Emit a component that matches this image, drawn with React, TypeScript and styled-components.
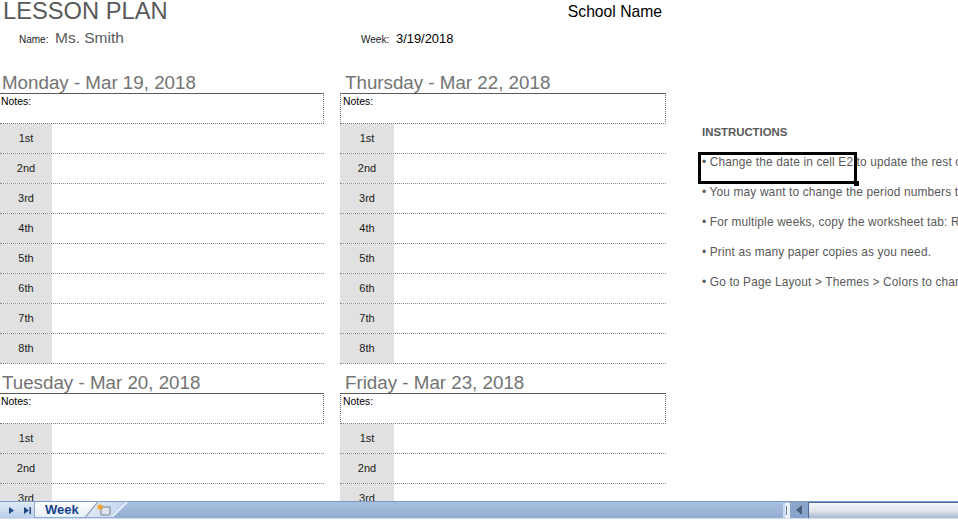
import React from 'react';
import styled, { createGlobalStyle } from 'styled-components';

const GlobalStyle = createGlobalStyle`
  html, body {
    margin: 0;
    padding: 0;
    background: #fff;
    font-family: "Liberation Sans", Arial, sans-serif;
  }
`;

const Page = styled.div`
  width: 958px;
  height: 520px;
  display: flex;
  flex-direction: column;
  overflow: hidden;
`;

const Sheet = styled.div`
  position: relative;
  height: 501px;
  flex: none;
  overflow: hidden;
`;

const Header = styled.header`
  width: 666px;
  height: 64px;
`;

const TitleRow = styled.div`
  display: flex;
  justify-content: space-between;
  align-items: flex-start;
  padding: 0 4px 0 3px;
`;

const Title = styled.h1`
  margin: 0;
  font-size: 23.7px;
  font-weight: 400;
  line-height: 23px;
  color: #595959;
`;

const SchoolName = styled.div`
  font-size: 15.7px;
  line-height: 24px;
  color: #000;
`;

const InfoRow = styled.div`
  display: flex;
  align-items: baseline;
  margin-top: 5px;
`;

const InfoField = styled.div<{ $width: number; $indent: number }>`
  width: ${(p) => p.$width}px;
  padding-left: ${(p) => p.$indent}px;
  display: flex;
  align-items: baseline;
  box-sizing: border-box;
`;

const InfoLabel = styled.span<{ $width: number }>`
  width: ${(p) => p.$width}px;
  font-size: 10px;
  color: #1a1a1a;
`;

const InfoValue = styled.span<{ $size: number; $color: string }>`
  font-size: ${(p) => p.$size}px;
  line-height: 18px;
  color: ${(p) => p.$color};
`;

const Body = styled.div`
  display: flex;
  align-items: flex-start;
`;

const DayColumn = styled.div<{ $width: number; $gap: number }>`
  width: ${(p) => p.$width}px;
  margin-right: ${(p) => p.$gap}px;
  flex: none;
`;

const DayTitle = styled.h2<{ $indent: number }>`
  margin: 0;
  height: 29px;
  box-sizing: border-box;
  padding: 8px 0 0 ${(p) => p.$indent}px;
  font-size: 18.75px;
  font-weight: 400;
  line-height: 21px;
  color: #737373;
  white-space: nowrap;
`;

const Notes = styled.div<{ $boxed: boolean }>`
  height: 31px;
  box-sizing: border-box;
  border-top: 1px solid #595959;
  border-right: 1px dotted #737373;
  border-bottom: 1px dotted #737373;
  border-left: ${(p) => (p.$boxed ? '1px dotted #737373' : 'none')};
  padding: 1px 0 0 ${(p) => (p.$boxed ? 2 : 1)}px;
  font-size: 10.4px;
  line-height: 14px;
  color: #000;
`;

const Period = styled.div<{ $cell: number }>`
  height: 30px;
  box-sizing: border-box;
  border-bottom: 1px dotted #888;
  display: grid;
  grid-template-columns: ${(p) => p.$cell}px 1fr;
`;

const PeriodLabel = styled.div`
  background: #e1e1e1;
  display: flex;
  align-items: center;
  justify-content: center;
  padding-bottom: 2px;
  font-size: 11px;
  color: #1a1a1a;
`;

const Instructions = styled.aside`
  flex: none;
  width: 256px;
  margin-left: 20px;
  padding-top: 60px;
  white-space: nowrap;
  overflow: hidden;
`;

const InstructionsTitle = styled.div`
  height: 30px;
  font-size: 11.4px;
  font-weight: 700;
  line-height: 16px;
  color: #595959;
`;

const InstructionLine = styled.div`
  height: 30px;
  font-size: 11.9px;
  letter-spacing: 0.15px;
  line-height: 16px;
  color: #595959;
`;

const SelectedCell = styled.div`
  position: absolute;
  left: 698px;
  top: 152px;
  width: 159px;
  height: 32px;
  box-sizing: border-box;
  border: 3px solid #000;

  &::after {
    content: '';
    position: absolute;
    right: -5px;
    bottom: -5px;
    width: 5px;
    height: 5px;
    background: #000;
  }
`;

const TabBar = styled.div`
  height: 16px;
  flex: none;
  display: flex;
  align-items: stretch;
  background: linear-gradient(#a9c0df, #93acd2);
  border-top: 1px solid #7c9ac6;
`;

const NavButtons = styled.div`
  width: 35px;
  flex: none;
  display: flex;
  align-items: center;
  gap: 10px;
  padding-left: 9px;
  box-sizing: border-box;
  background: linear-gradient(#dfe9f7, #bacee9);
  border-right: 1px solid #8ea8cd;
  color: #1f4a86;
`;

const Tabs = styled.div`
  display: flex;
  height: 15px;
`;

const WeekTab = styled.div`
  width: 62px;
  padding: 0 0 0 10px;
  box-sizing: border-box;
  background: linear-gradient(#fff, #e6eef8);
  clip-path: polygon(0 0, 100% 0, 81% 100%, 0 100%);
  font-size: 13px;
  font-weight: 700;
  line-height: 15px;
  color: #15428b;
`;

const NewTab = styled.div`
  position: relative;
  width: 43px;
  margin-left: -12px;
  padding-right: 7px;
  box-sizing: border-box;
  display: flex;
  align-items: center;
  justify-content: center;
  background: linear-gradient(100deg, #e4edf8, #bdd1eb);
  clip-path: polygon(0 100%, 28% 0, 100% 0, 65% 100%);
`;

const TabEdges = styled.svg`
  position: absolute;
  inset: 0;
`;

const Spacer = styled.div`
  flex: 1;
`;

const ScrollThumb = styled.div`
  width: 7px;
  margin: 1px 0 0;
  background: linear-gradient(90deg, #dce7f5, #fff);
  border-left: 2px solid #c9d8ec;
  border-right: 2px solid #e9f0f9;
  box-sizing: border-box;
  display: flex;
  justify-content: center;

  &::before {
    content: '';
    width: 1px;
    margin: 3px 0;
    background: #5d7aa5;
  }
`;

const ScrollArrow = styled.div`
  width: 18px;
  flex: none;
  display: flex;
  align-items: center;
  justify-content: center;
  background: #8aa5cb;
`;

const ScrollTrack = styled.div`
  width: 150px;
  flex: none;
  background: linear-gradient(#f3f5f8, #e2e7ee 50%, #a9b9cf);
  border-left: 1px solid #4a6a9c;
  border-top: 1px solid #4a6a9c;
  box-sizing: border-box;
`;

const BottomEdge = styled.div`
  height: 3px;
  flex: none;
  background: linear-gradient(#cfdef1 1px, #fff 1px);
`;

const allPeriods = ['1st', '2nd', '3rd', '4th', '5th', '6th', '7th', '8th'];
const visiblePeriods = allPeriods.slice(0, 3);

const instructions = [
  '• Change the date in cell E2 to update the rest of',
  '• You may want to change the period numbers to',
  '• For multiple weeks, copy the worksheet tab: Right',
  '• Print as many paper copies as you need.',
  '• Go to Page Layout > Themes > Colors to change',
];

type DayProps = {
  title: string;
  boxed?: boolean;
  cell: number;
  indent: number;
  periods: string[];
};

function Day({ title, boxed = false, cell, indent, periods }: DayProps) {
  return (
    <>
      <DayTitle $indent={indent}>{title}</DayTitle>
      <Notes $boxed={boxed}>Notes:</Notes>
      {periods.map((p) => (
        <Period key={p} $cell={cell}>
          <PeriodLabel>{p}</PeriodLabel>
          <div />
        </Period>
      ))}
    </>
  );
}

export default function App() {
  return (
    <Page>
      <GlobalStyle />
      <Sheet>
        <Header>
          <TitleRow>
            <Title>LESSON PLAN</Title>
            <SchoolName>School Name</SchoolName>
          </TitleRow>
          <InfoRow>
            <InfoField $width={342} $indent={19}>
              <InfoLabel $width={36}>Name:</InfoLabel>
              <InfoValue $size={15.5} $color="#595959">Ms. Smith</InfoValue>
            </InfoField>
            <InfoField $width={300} $indent={19}>
              <InfoLabel $width={35}>Week:</InfoLabel>
              <InfoValue $size={12.9} $color="#000">3/19/2018</InfoValue>
            </InfoField>
          </InfoRow>
        </Header>
        <Body>
          <DayColumn $width={324} $gap={16}>
            <Day title="Monday - Mar 19, 2018" cell={52} indent={2} periods={allPeriods} />
            <Day title="Tuesday - Mar 20, 2018" cell={52} indent={2} periods={visiblePeriods} />
          </DayColumn>
          <DayColumn $width={326} $gap={16}>
            <Day title="Thursday - Mar 22, 2018" boxed cell={54} indent={5} periods={allPeriods} />
            <Day title="Friday - Mar 23, 2018" boxed cell={54} indent={5} periods={visiblePeriods} />
          </DayColumn>
          <Instructions>
            <InstructionsTitle>INSTRUCTIONS</InstructionsTitle>
            {instructions.map((line) => (
              <InstructionLine key={line}>{line}</InstructionLine>
            ))}
          </Instructions>
        </Body>
        <SelectedCell />
      </Sheet>
      <TabBar>
        <NavButtons>
          <svg width="5" height="7" viewBox="0 0 5 7"><path d="M0 0l5 3.5L0 7z" fill="currentColor" /></svg>
          <svg width="7" height="7" viewBox="0 0 7 7"><path d="M0 0l5 3.5L0 7zM5.5 0H7v7H5.5z" fill="currentColor" /></svg>
        </NavButtons>
        <Tabs>
          <WeekTab>Week</WeekTab>
          <NewTab>
            <TabEdges width="43" height="15" viewBox="0 0 43 15">
              <path d="M0 15L12 0" stroke="#7d93b3" strokeWidth="2" fill="none" />
              <path d="M43 0L28 15" stroke="#fff" strokeWidth="2" fill="none" />
            </TabEdges>
            <svg width="15" height="13" viewBox="0 0 15 13">
              <path d="M5 4h9v7l-1 1H5z" fill="#dfe6ef" stroke="#77808c" />
              <path d="M4 0l1 2.4L7.5 2 6 4l1.5 2L5 5.6 4 8 3 5.6.5 6 2 4 .5 2 3 2.4z" fill="#f3a32c" />
            </svg>
          </NewTab>
        </Tabs>
        <Spacer />
        <ScrollThumb />
        <ScrollArrow>
          <svg width="6" height="10" viewBox="0 0 6 10"><path d="M6 0v10L0 5z" fill="#4b5f7d" /></svg>
        </ScrollArrow>
        <ScrollTrack />
      </TabBar>
      <BottomEdge />
    </Page>
  );
}
